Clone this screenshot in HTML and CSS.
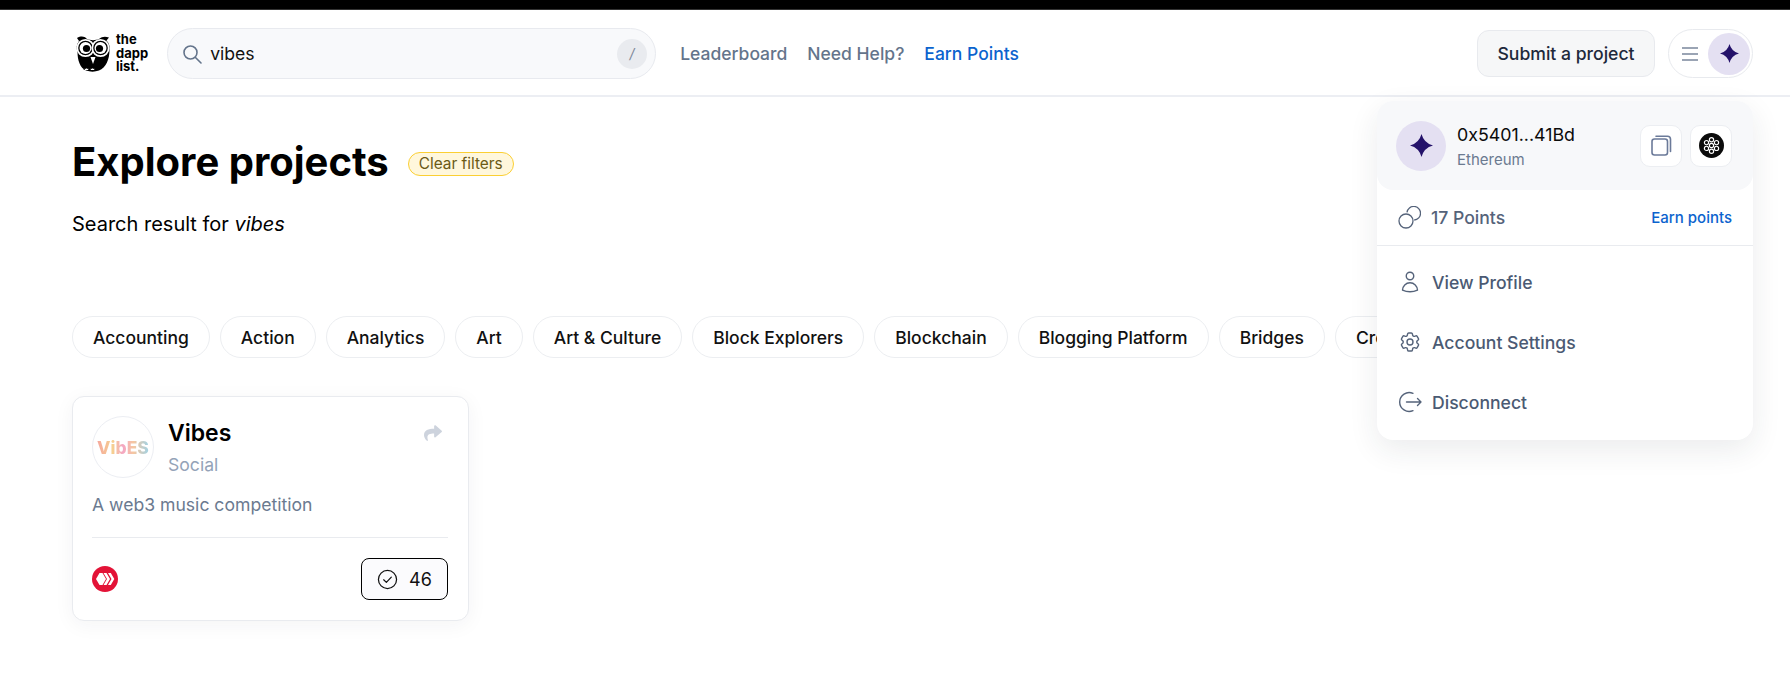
FILE: index.html
```html
<!DOCTYPE html>
<html lang="en">
<head>
<meta charset="utf-8">
<title>The Dapp List</title>
<link rel="stylesheet" href="styles.css">
</head>
<body>
<div class="topbar"></div>
<header class="header">
  <a class="brand">
    <svg class="owl" viewBox="0 0 34 38" width="34" height="38">
      <path d="M1 3 C5 1 8 1 11 4 C14 5.500 20 5.500 23 4 C26 1.500 29 1 33 2.500 L30.500 5.500 C33 8 34 11 33.500 15 C33.500 24 30 33 23 35.500 C19 37 14 37 10 35.500 C4 33 1.500 25 1.500 17 C0 13 0.500 9 3 6 Z" fill="#000"/>
      <circle cx="9.500" cy="13" r="8.200" fill="#000" stroke="#fff" stroke-width="1.800"/>
      <circle cx="24.500" cy="13" r="8.200" fill="#000" stroke="#fff" stroke-width="1.800"/>
      <circle cx="9.500" cy="13" r="6" fill="#fff"/>
      <circle cx="24.500" cy="13" r="6" fill="#fff"/>
      <circle cx="10.500" cy="13.500" r="3.600" fill="#000"/>
      <circle cx="23.500" cy="13.500" r="3.600" fill="#000"/>
      <path d="M14.500 22 L19.500 22 L17 29 Z" fill="#fff"/>
      <path d="M8 35 a2.500 2 0 0 1 5 0 M14 35 a2.500 2 0 0 1 5 0" fill="#fff" stroke="#000" stroke-width="1"/>
    </svg>
    <span class="brand-text">the<br>dapp<br>list.</span>
  </a>
  <div class="search">
    <svg class="search-icon" viewBox="0 0 20 20" width="20" height="20" fill="none" stroke="#64748b" stroke-width="1.600" stroke-linecap="round"><circle cx="8.500" cy="8.500" r="6.500"/><path d="M13.500 13.500 L19 19"/></svg>
    <span class="search-value">vibes</span>
    <span class="kbd">/</span>
  </div>
  <nav class="nav">
    <a class="nav-link">Leaderboard</a>
    <a class="nav-link">Need Help?</a>
    <a class="nav-link nav-link-accent">Earn Points</a>
  </nav>
  <div class="header-actions">
    <button class="submit">Submit a project</button>
    <div class="menu-pill">
      <svg viewBox="0 0 16 14" width="16" height="14" fill="none" stroke="#7a869c" stroke-width="1.500"><path d="M0 1 H16 M0 7 H16 M0 13 H16"/></svg>
      <span class="avatar avatar-sm">
        <svg viewBox="0 0 24 24" width="19" height="19"><path class="star" d="M12 0 Q14.500 9.500 24 12 Q14.500 14.500 12 24 Q9.500 14.500 0 12 Q9.500 9.500 12 0 Z"/></svg>
      </span>
    </div>
  </div>
</header>

<main class="main">
  <div class="title-row">
    <h1 class="title">Explore projects</h1>
    <button class="clear">Clear filters</button>
  </div>
  <p class="result">Search result for <em class="result-term">vibes</em></p>

  <div class="chips">
    <span class="chip">Accounting</span>
    <span class="chip">Action</span>
    <span class="chip">Analytics</span>
    <span class="chip">Art</span>
    <span class="chip">Art &amp; Culture</span>
    <span class="chip">Block Explorers</span>
    <span class="chip">Blockchain</span>
    <span class="chip">Blogging Platform</span>
    <span class="chip">Bridges</span>
    <span class="chip">Crowdfunding</span>
  </div>

  <article class="card">
    <div class="card-top">
      <div class="card-logo"><span class="card-logo-text">VibES</span></div>
      <div class="card-heading">
        <h2 class="card-title">Vibes</h2>
        <div class="card-cat">Social</div>
      </div>
      <svg class="share" viewBox="0 0 512 512" width="18" height="18"><path fill="#cdd3dd" d="M503.691 189.836L327.687 37.851C312.281 24.546 288 35.347 288 56.015v80.053C127.371 137.907 0 170.1 0 322.326c0 61.441 39.581 122.309 83.333 154.132 13.653 9.931 33.111-2.533 28.077-18.631C66.066 312.814 132.917 274.316 288 272.085V360c0 20.7 24.3 31.453 39.687 18.164l176.004-152c11.071-9.562 11.086-26.753 0-36.328z"/></svg>
    </div>
    <p class="card-desc">A web3 music competition</p>
    <div class="card-foot">
      <svg viewBox="0 0 26 26" width="26" height="26"><circle cx="13" cy="13" r="13" fill="#e31337"/><path d="M4 13 L7.500 7 H10.500 L14 13 L10.500 19 H7.500 Z" fill="#fff"/><path d="M11.500 7 H14.500 L18 13 L14.500 19 H11.500 L15 13 Z" fill="#fff"/><path d="M16 7 H18.800 L22.300 13 L18.800 19 H16 L19.500 13 Z" fill="#fff"/></svg>
      <button class="vote">
        <svg viewBox="0 0 22 22" width="21" height="21" fill="none" stroke="#111" stroke-width="1.300"><circle cx="11" cy="11" r="9.500"/><path d="M7 11.300 L9.800 14 L15 8.500" stroke-linecap="round" stroke-linejoin="round"/></svg>
        <span>46</span>
      </button>
    </div>
  </article>
</main>

<aside class="dropdown">
  <div class="dd-head">
    <span class="avatar avatar-lg">
      <svg viewBox="0 0 24 24" width="23" height="23"><path class="star" d="M12 0 Q14.500 9.500 24 12 Q14.500 14.500 12 24 Q9.500 14.500 0 12 Q9.500 9.500 12 0 Z"/></svg>
    </span>
    <div class="dd-id">
      <div class="dd-addr">0x5401...41Bd</div>
      <div class="dd-chain">Ethereum</div>
    </div>
    <button class="icon-btn">
      <svg viewBox="0 0 22 22" width="22" height="22" fill="none" stroke="#6b7a99" stroke-width="1.600"><rect x="2" y="4" width="15.500" height="16" rx="2.500"/><path d="M6 1.300 H17.500 A3 3 0 0 1 20.500 4.300 V16.500" stroke-linecap="round"/></svg>
    </button>
    <button class="icon-btn">
      <svg viewBox="0 0 26 26" width="25" height="25"><circle cx="13" cy="13" r="13" fill="#0b0b0b"/><g fill="none" stroke="#fff" stroke-width="1.200"><circle cx="13" cy="13" r="2.200"/><circle cx="13" cy="7" r="2.200"/><circle cx="13" cy="19" r="2.200"/><circle cx="7.800" cy="10" r="2.200"/><circle cx="18.200" cy="10" r="2.200"/><circle cx="7.800" cy="16" r="2.200"/><circle cx="18.200" cy="16" r="2.200"/></g></svg>
    </button>
  </div>
  <div class="dd-points">
    <svg viewBox="0 0 23 23" width="23" height="23" fill="none" stroke="#55637a" stroke-width="1.300"><circle cx="8" cy="15" r="7"/><path d="M9 6.300 A6.800 6.800 0 1 1 16.200 14"/></svg>
    <span class="dd-points-label">17 Points</span>
    <a class="dd-earn">Earn points</a>
  </div>
  <ul class="dd-list">
    <li class="dd-item">
      <svg viewBox="0 0 24 24" width="24" height="24" fill="none" stroke="#55637a" stroke-width="1.400"><path d="M15.750 6a3.750 3.750 0 11-7.500 0 3.750 3.750 0 017.500 0zM4.501 20.118a7.500 7.500 0 0114.998 0A17.933 17.933 0 0112 21.750c-2.676 0-5.216-.584-7.499-1.632z" stroke-linejoin="round"/></svg>
      <span>View Profile</span>
    </li>
    <li class="dd-item">
      <svg viewBox="0 0 24 24" width="24" height="24" fill="none" stroke="#55637a" stroke-width="1.400" stroke-linejoin="round"><path d="M9.594 3.940c.09-.542.56-.94 1.110-.94h2.593c.55 0 1.020.398 1.110.94l.213 1.281c.063.374.313.686.645.870.074.040.147.083.220.127.324.196.72.257 1.075.124l1.217-.456a1.125 1.125 0 011.370.49l1.296 2.247a1.125 1.125 0 01-.26 1.431l-1.003.827c-.293.24-.438.613-.431.992a6.759 6.759 0 010 .255c-.007.378.138.75.43.99l1.005.828c.424.35.534.954.26 1.430l-1.298 2.247a1.125 1.125 0 01-1.369.491l-1.217-.456c-.355-.133-.75-.072-1.076.124a6.570 6.570 0 01-.22.128c-.331.183-.581.495-.644.869l-.213 1.280c-.09.543-.56.941-1.110.941h-2.594c-.55 0-1.020-.398-1.110-.94l-.213-1.281c-.062-.374-.312-.686-.644-.87a6.520 6.520 0 01-.22-.127c-.325-.196-.72-.257-1.076-.124l-1.217.456a1.125 1.125 0 01-1.369-.49l-1.297-2.247a1.125 1.125 0 01.26-1.431l1.004-.827c.292-.24.437-.613.43-.992a6.932 6.932 0 010-.255c.007-.378-.138-.75-.43-.99l-1.004-.828a1.125 1.125 0 01-.26-1.430l1.297-2.247a1.125 1.125 0 011.370-.491l1.216.456c.356.133.751.072 1.076-.124.072-.044.146-.087.22-.128.332-.183.582-.495.644-.869l.214-1.281z"/><circle cx="12" cy="12" r="3"/></svg>
      <span>Account Settings</span>
    </li>
    <li class="dd-item">
      <svg viewBox="0 0 24 24" width="24" height="24" fill="none" stroke="#55637a" stroke-width="1.400" stroke-linecap="round" stroke-linejoin="round"><path d="M15 3.300 A9.500 9.500 0 1 0 15 20.700"/><path d="M8.500 12 H23 M19.500 8.500 L23 12 L19.500 15.500"/></svg>
      <span>Disconnect</span>
    </li>
  </ul>
</aside>
</body>
</html>
```
FILE: styles.css
```css
* { box-sizing: border-box; }
html, body { margin: 0; padding: 0; height: 100%; }
body {
  position: relative;
  overflow: hidden;
  background: #fff;
  color: #000;
  font-family: Inter, "Liberation Sans", sans-serif;
}
button { font-family: inherit; cursor: pointer; }
.topbar { height: 10px; background: #000; border-bottom: 1px solid #333; }

.header {
  display: flex;
  align-items: center;
  height: 87px;
  padding: 2px 37px 0 76px;
  border-bottom: 2px solid #eceef3;
}
.brand { display: flex; align-items: center; gap: 6px; margin-right: 19px; }
.brand-text { font-size: 13px; font-weight: 700; line-height: 13.500px; color: #000; }
.search {
  display: flex;
  align-items: center;
  width: 489px;
  height: 51px;
  padding: 0 8px 0 14px;
  background: #f8f9fb;
  border: 1px solid #e8eaef;
  border-radius: 26px;
}
.search-icon { flex: none; }
.search-value { margin-left: 8px; font-size: 17.600px; color: #111; flex: 1; }
.kbd {
  display: flex;
  align-items: center;
  justify-content: center;
  width: 30px;
  height: 30px;
  border-radius: 50%;
  background: #e9ebef;
  color: #7d8798;
  font-size: 14px;
  font-style: italic;
}
.nav { display: flex; align-items: center; gap: 20px; margin-left: 24px; }
.nav-link { font-size: 17.500px; font-weight: 500; color: #64748b; }
.nav-link-accent { color: #0b63ce; }
.header-actions { display: flex; align-items: center; gap: 13px; margin-left: auto; }
.submit {
  width: 178px;
  height: 47px;
  background: #f6f7f8;
  border: 1px solid #e8eaee;
  border-radius: 12px;
  font-size: 17.600px;
  font-weight: 500;
  color: #1e293b;
}
.menu-pill {
  display: flex;
  align-items: center;
  justify-content: space-between;
  width: 85px;
  height: 49px;
  padding: 0 2px 0 13px;
  border: 1px solid #e8eaee;
  border-radius: 25px;
}
.avatar {
  display: flex;
  align-items: center;
  justify-content: center;
  flex: none;
  border-radius: 50%;
  background: #e4e0f2;
}
.avatar-sm { width: 42px; height: 42px; }
.avatar-lg { width: 50px; height: 50px; }
.star { fill: #24126a; }

.main { padding: 41px 72px 0; }
.title-row { display: flex; align-items: center; }
.title { margin: 0; font-size: 40px; line-height: 48px; font-weight: 700; }
.clear {
  height: 24px;
  margin: 3px 0 0 19px;
  padding: 0 10px;
  background: #fff7dc;
  border: 1px solid #fbcf33;
  border-radius: 12px;
  font-size: 15.400px;
  color: #6b5a16;
}
.result { margin: 24px 0 0; font-size: 20px; line-height: 28px; }
.chips { display: flex; gap: 10px; max-width: 1305px; margin-top: 78px; overflow: hidden; }
.chip {
  flex: none;
  height: 42px;
  padding: 0 20px;
  display: flex;
  align-items: center;
  border: 1px solid #eceef1;
  border-radius: 21px;
  font-size: 17.500px;
  font-weight: 500;
  color: #111;
}

.card {
  width: 397px;
  margin-top: 38px;
  padding: 19px 20px 20px 19px;
  border: 1px solid #e9ebef;
  border-radius: 12px;
  background: #fff;
  box-shadow: 0 4px 20px rgba(30, 41, 59, 0.05);
}
.card-top { display: flex; align-items: flex-start; }
.card-logo {
  display: flex;
  align-items: center;
  justify-content: center;
  flex: none;
  width: 62px;
  height: 62px;
  border: 1px solid #eceef3;
  border-radius: 50%;
}
.card-logo-text {
  font-size: 17.500px;
  font-weight: 800;
  background: linear-gradient(90deg, #f5a79e 0%, #f6d08f 30%, #f4a6c4 50%, #f6c7a0 70%, #9fd2e6 100%);
  -webkit-background-clip: text;
  background-clip: text;
  color: transparent;
}
.card-heading { flex: 1; margin: 3px 0 0 14px; }
.card-title { margin: 0; font-size: 23px; line-height: 28px; font-weight: 600; }
.card-cat { margin-top: 6px; font-size: 17.600px; line-height: 24px; color: #94a3b8; }
.share { flex: none; margin: 8px 6px 0 0; }
.card-desc {
  margin: 15px 0 0;
  padding-bottom: 20px;
  border-bottom: 1px solid #e9ebef;
  font-size: 17.600px;
  line-height: 24px;
  color: #6b7a90;
}
.card-foot { display: flex; align-items: center; justify-content: space-between; margin-top: 20px; }
.vote {
  display: flex;
  align-items: center;
  justify-content: center;
  gap: 11px;
  width: 87px;
  height: 42px;
  background: #fbfbfd;
  border: 1px solid #000;
  border-radius: 8px;
  font-size: 18px;
  color: #111;
}

.dropdown {
  position: absolute;
  top: 101px;
  right: 37px;
  width: 376px;
  height: 339px;
  background: #fff;
  border-radius: 16px;
  box-shadow: 0 10px 30px rgba(30, 41, 59, 0.09);
}
.dd-head {
  display: flex;
  align-items: center;
  gap: 8px;
  height: 89px;
  padding: 0 21px 0 19px;
  background: #f7f8fa;
  border-radius: 16px;
}
.dd-id { flex: 1; margin-left: 3px; padding-top: 2px; }
.dd-addr { font-size: 17.800px; line-height: 24px; color: #0b0b0b; }
.dd-chain { margin-top: 3px; font-size: 15px; line-height: 20px; color: #6b7a90; }
.icon-btn {
  display: flex;
  align-items: center;
  justify-content: center;
  width: 42px;
  height: 42px;
  padding: 0;
  background: #fff;
  border: 1px solid #eceef2;
  border-radius: 10px;
}
.dd-points {
  display: flex;
  align-items: center;
  height: 56px;
  padding: 0 21px;
  border-bottom: 1px solid #e9ebef;
}
.dd-points-label { margin-left: 10px; flex: 1; font-size: 17.600px; font-weight: 500; color: #55637a; }
.dd-earn { font-size: 15px; font-weight: 500; color: #0b63ce; }
.dd-list { margin: 0; padding: 6px 0 8px; list-style: none; }
.dd-item {
  display: flex;
  align-items: center;
  gap: 10px;
  height: 60px;
  padding: 0 21px;
  font-size: 17.600px;
  font-weight: 500;
  color: #4b5a73;
}
```
